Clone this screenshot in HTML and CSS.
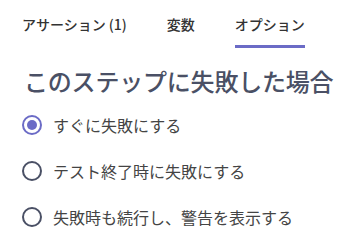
FILE: index.html
```html
<!DOCTYPE html>
<html lang="ja">
<head>
    <meta charset="UTF-8">
    <meta name="viewport" content="width=device-width, initial-scale=1.0">
    <title>オプション</title>
    <link rel="stylesheet" href="styles.css">
</head>
<body>
    <div class="panel">
        <div class="tabs">
            <a class="tabs__item" href="#">アサーション (1)</a>
            <a class="tabs__item" href="#">変数</a>
            <a class="tabs__item tabs__item--active" href="#">オプション</a>
        </div>

        <h2 class="section-title">このステップに失敗した場合</h2>

        <form class="options">
            <label class="option">
                <input type="radio" name="onFail" checked>
                <span class="option__mark"></span>
                <span class="option__text">すぐに失敗にする</span>
            </label>
            <label class="option">
                <input type="radio" name="onFail">
                <span class="option__mark"></span>
                <span class="option__text">テスト終了時に失敗にする</span>
            </label>
            <label class="option">
                <input type="radio" name="onFail">
                <span class="option__mark"></span>
                <span class="option__text">失敗時も続行し、警告を表示する</span>
            </label>
        </form>
    </div>
</body>
</html>
```

FILE: styles.css
```css
body{
    margin: 0;
    background-color: #fff;
    font-family: "Noto Sans CJK JP", "Noto Sans", sans-serif;
}
.panel{
    padding: 0 22px;
}
.tabs{
    display: flex;
    gap: 40px;
    padding-top: 14px;
}
.tabs__item{
    display: block;
    padding-bottom: 11px;
    border-bottom: 3px solid transparent;
    font-size: 14px;
    line-height: 20px;
    font-weight: 500;
    color: #333;
    text-decoration: none;
}
.tabs__item--active{
    border-bottom-color: #6b6bc6;
}
.section-title{
    margin: 18px 0 0 2px;
    font-size: 24px;
    line-height: 30px;
    font-weight: 500;
    letter-spacing: -0.2px;
    color: #4a5065;
}
.options{
    display: flex;
    flex-direction: column;
    gap: 24px;
    margin-top: 18px;
}
.option{
    display: flex;
    align-items: center;
    gap: 11px;
    font-size: 16px;
    line-height: 22px;
    color: #444;
    cursor: pointer;
}
.option input{
    display: none;
}
.option__mark{
    width: 16px;
    height: 16px;
    border: 2px solid #4a5065;
    border-radius: 50%;
    flex-shrink: 0;
    display: flex;
    align-items: center;
    justify-content: center;
}
.option input:checked + .option__mark{
    border-color: #6b6bc6;
}
.option input:checked + .option__mark::after{
    content: "";
    width: 10px;
    height: 10px;
    border-radius: 50%;
    background-color: #6b6bc6;
}
```
